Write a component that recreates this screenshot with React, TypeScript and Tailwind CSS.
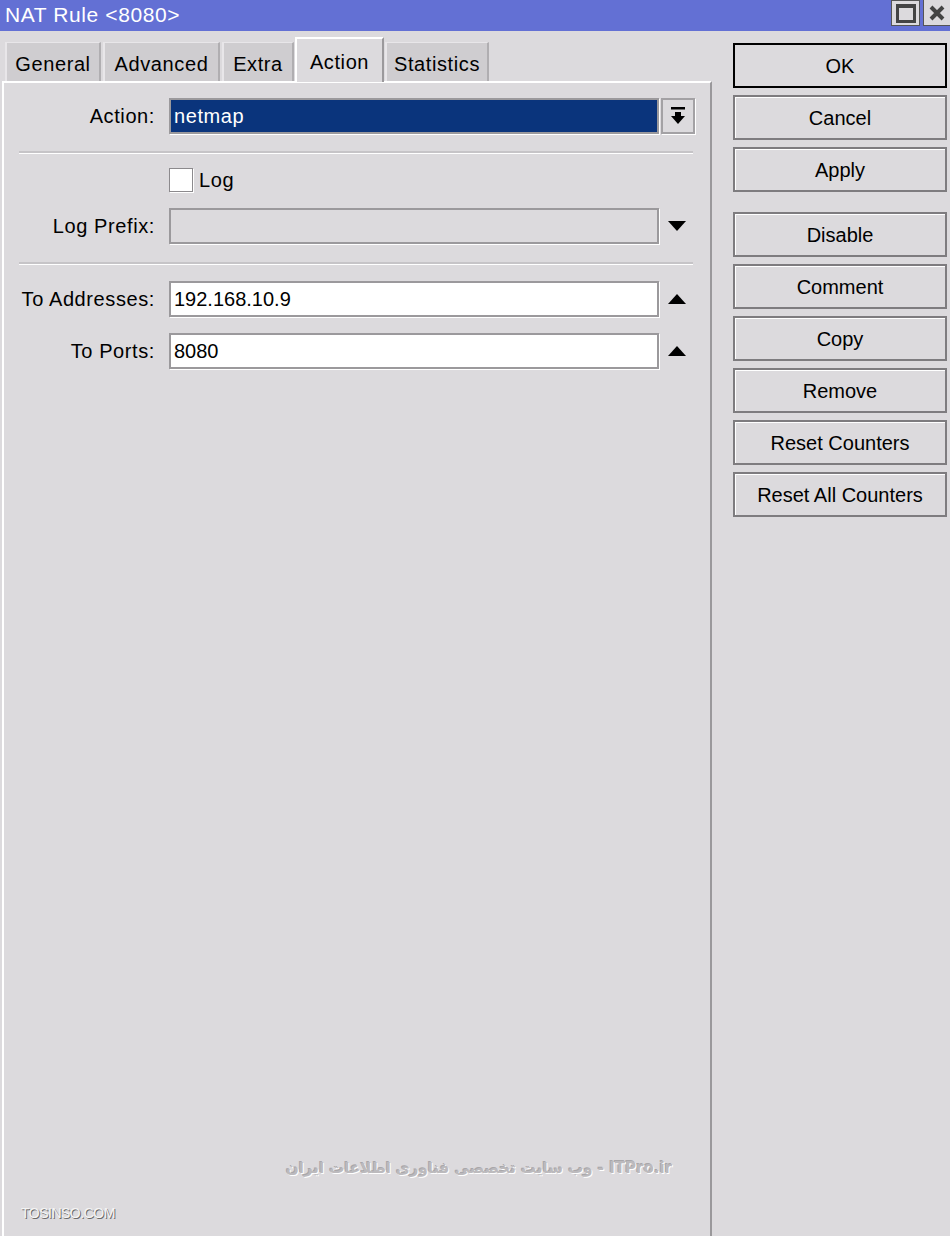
import React from 'react';

const font = { fontFamily: '"Liberation Sans", Arial, sans-serif' };

const tabs: { label: string; width: string }[] = [
  { label: 'General', width: 'w-[96px]' },
  { label: 'Advanced', width: 'w-[117px]' },
  { label: 'Extra', width: 'w-[72px]' },
  { label: 'Action', width: 'w-[89px]' },
  { label: 'Statistics', width: 'w-[104px]' },
];
const activeTab = 'Action';

const sideButtons: { label: string; gapBefore?: boolean; isDefault?: boolean }[] = [
  { label: 'OK', isDefault: true },
  { label: 'Cancel' },
  { label: 'Apply' },
  { label: 'Disable', gapBefore: true },
  { label: 'Comment' },
  { label: 'Copy' },
  { label: 'Remove' },
  { label: 'Reset Counters' },
  { label: 'Reset All Counters' },
];

const TriangleUp = () => (
  <svg width="18" height="10" viewBox="0 0 18 10">
    <path d="M9 0 L18 10 L0 10 Z" fill="#000" />
  </svg>
);

const TriangleDown = () => (
  <svg width="18" height="10" viewBox="0 0 18 10">
    <path d="M0 0 L18 0 L9 10 Z" fill="#000" />
  </svg>
);

const Separator = () => (
  <div className="ml-[15px] mr-[17px] border-t-2 border-[#c6c4c7] border-b border-b-white" />
);

const Label: React.FC<{ children: React.ReactNode }> = ({ children }) => (
  <div className="w-[152px] shrink-0 text-right text-[20px] tracking-[0.6px] text-black pr-px">{children}</div>
);

const FieldRow: React.FC<{
  label: string;
  value?: string;
  disabled?: boolean;
  icon?: React.ReactNode;
}> = ({ label, value, disabled, icon }) => (
  <div className="flex items-center h-[36px]">
    <Label>{label}</Label>
    <div
      className={`ml-[13px] w-[490px] h-[36px] border-2 border-[#9b999c] shadow-[1px_1px_0_#fff] flex items-center px-[3px] text-[20px] ${
        disabled ? 'bg-[#dcdadd]' : 'bg-white'
      }`}
    >
      {value}
    </div>
    <div className="w-[36px] flex justify-center">{icon}</div>
  </div>
);

export default function App() {
  return (
    <div className="w-[950px] h-[1236px] bg-[#dcdadd] flex flex-col overflow-hidden" style={font}>
      {/* title bar */}
      <div className="h-[31px] bg-[#6370d4] flex items-start justify-between shrink-0">
        <div className="pl-[5px] pt-[3px] text-white text-[21px] tracking-[0.6px] leading-[24px]">NAT Rule &lt;8080&gt;</div>
        <div className="flex gap-[3px]">
          <div className="w-[29px] h-[26px] bg-[#dcdadd] border border-[#555] flex items-center justify-center">
            <div className="w-[20px] h-[19px] border-[3px] border-[#444] border-t-[4px]" />
          </div>
          <div className="w-[27px] h-[26px] bg-[#dcdadd] border-l border-b border-[#555] flex items-center justify-center">
            <svg width="16" height="16" viewBox="0 0 16 16">
              <path d="M2 2 L14 14 M14 2 L2 14" stroke="#444" strokeWidth="4" />
            </svg>
          </div>
        </div>
      </div>

      <div className="flex flex-1 min-h-0">
        {/* left: tabs + panel */}
        <div className="w-[712px] flex flex-col pt-[5px]">
          <div className="flex items-end h-[45px] pl-[5px] gap-[2px]">
            {tabs.map((t) =>
              t.label === activeTab ? (
                <div
                  key={t.label}
                  className={`${t.width} h-[45px] -mb-px -mx-px relative z-10 bg-[#dcdadd] border-t-2 border-l-2 border-white border-r-2 border-r-[#9b999c] flex justify-center items-start pt-[8px] text-[20px] tracking-[0.6px]`}
                >
                  {t.label}
                </div>
              ) : (
                <div
                  key={t.label}
                  className={`${t.width} h-[39px] bg-[#cfcdd0] border-t border-l-2 border-[#e8e6e9] border-r-2 border-r-[#b0aeb1] flex justify-center items-center pt-[3px] text-[20px] tracking-[0.6px]`}
                >
                  {t.label}
                </div>
              )
            )}
          </div>

          <div className="flex-1 ml-[2px] border-t-2 border-l-2 border-white border-r-2 border-r-[#9a989b] flex flex-col pt-[15px] relative">
            <div className="flex items-center h-[36px]">
              <Label>Action:</Label>
              <div className="ml-[13px] w-[490px] h-[36px] border-2 border-[#9b999c] shadow-[1px_1px_0_#fff] bg-[#0a347c] flex items-center px-[3px]">
                <span className="text-white text-[20px] tracking-[0.6px] leading-[24px]">netmap</span>
              </div>
              <div className="ml-[2px] w-[34px] h-[36px] border-2 border-[#a3a1a4] shadow-[1px_1px_0_#fff] flex items-center justify-center">
                <svg width="16" height="18" viewBox="0 0 16 18">
                  <rect x="1" y="0" width="14" height="2.5" fill="#000" />
                  <path d="M5 5 H11 V9 H15 L8 17 L1 9 H5 Z" fill="#000" />
                </svg>
              </div>
            </div>

            <div className="mt-[17px]">
              <Separator />
            </div>

            <div className="flex items-center h-[24px] mt-[14px]">
              <div className="w-[152px]" />
              <div className="ml-[13px] w-[24px] h-[24px] bg-white border border-[#8c8a8d] shadow-[1px_1px_0_#fff]" />
              <span className="ml-[6px] text-[20px] tracking-[0.6px]">Log</span>
            </div>

            <div className="mt-[16px]">
              <FieldRow label="Log Prefix:" disabled icon={<TriangleDown />} />
            </div>

            <div className="mt-[18px]">
              <Separator />
            </div>

            <div className="mt-[16px]">
              <FieldRow label="To Addresses:" value="192.168.10.9" icon={<TriangleUp />} />
            </div>
            <div className="mt-[16px]">
              <FieldRow label="To Ports:" value="8080" icon={<TriangleUp />} />
            </div>

            <div className="mt-auto flex flex-col">
              <div
                dir="rtl"
                className="ml-[272px] w-[406px] whitespace-nowrap text-center text-[15px] font-bold text-[#bcbabd] [text-shadow:1px_1px_0_#fff,-1px_-1px_0_#a9a7aa]"
                style={{ fontFamily: '"DejaVu Sans", sans-serif' }}
              >
                ITPro.ir - وب سایت تخصصی فناوری اطلاعات ایران
              </div>
              <div className="pl-[17px] mt-[24px] mb-[12px] text-[14px] tracking-[-0.5px] text-[#f4f4f4] [text-shadow:1px_1px_0_#6b6b6b]">
                TOSINSO.COM
              </div>
            </div>
          </div>
        </div>

        {/* right: buttons */}
        <div className="flex-1 pl-[21px] pr-[3px] pt-[12px] flex flex-col">
          {sideButtons.map((b, i) => (
            <div
              key={b.label}
              className={`h-[45px] w-[214px] flex items-center justify-center text-[20px] bg-[#dcdadd] ${
                b.isDefault
                  ? 'border-2 border-black'
                  : 'border-2 border-[#7e7c7f] shadow-[inset_1px_1px_0_#fff]'
              } ${i === 0 ? '' : b.gapBefore ? 'mt-[20px]' : 'mt-[7px]'}`}
            >
              {b.label}
            </div>
          ))}
        </div>
      </div>
    </div>
  );
}
